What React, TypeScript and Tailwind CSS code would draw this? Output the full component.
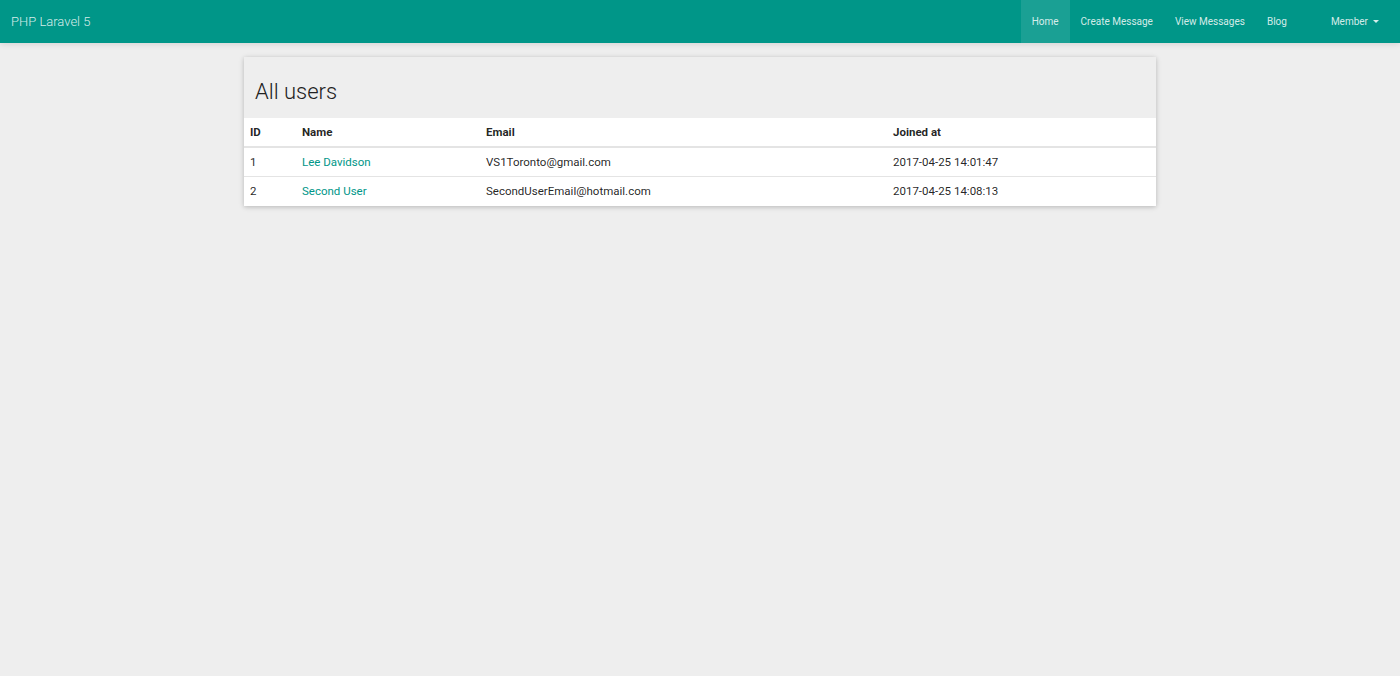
import React from "react";

export default function App() {
  const rows = [
    { id: 1, name: "Lee Davidson", email: "VS1Toronto@gmail.com", joined: "2017-04-25 14:01:47" },
    { id: 2, name: "Second User", email: "SecondUserEmail@hotmail.com", joined: "2017-04-25 14:08:13" },
  ];
  return (
    <div className="min-h-[676px] bg-[#eeeeee] font-['Roboto',sans-serif] text-[11.5px] text-[rgba(0,0,0,0.87)]">
      <nav className="flex h-[43px] items-stretch bg-[#009688] shadow-[0_1px_6px_rgba(0,0,0,0.12)]">
        <div className="flex items-center pl-[11px] text-[13px] font-light text-[rgba(255,255,255,0.84)]">PHP Laravel 5</div>
        <div className="ml-auto flex items-stretch text-[10px] text-[rgba(255,255,255,0.84)]">
          <div className="flex items-center bg-[rgba(255,255,255,0.1)] px-[11px]">Home</div>
          <div className="flex items-center px-[11px]">Create Message</div>
          <div className="flex items-center px-[11px]">View Messages</div>
          <div className="flex items-center px-[11px]">Blog</div>
          <div className="ml-[22px] flex items-center pl-[11px] pr-[21px]">
            Member
            <span className="ml-[5px] inline-block h-0 w-0 border-x-[3px] border-t-[3px] border-x-transparent border-t-[rgba(255,255,255,0.84)]" />
          </div>
        </div>
      </nav>
      <div className="flex justify-center pt-[14px]">
        <div className="w-[912px] bg-white shadow-[0_1px_6px_rgba(0,0,0,0.12),0_1px_4px_rgba(0,0,0,0.12)]">
          <div className="h-[61px] bg-[#eeeeee] pl-[11px] pt-[21px] text-[22px] font-light leading-[28px] text-[#212121]">All users</div>
          <div className="flex h-[30px] items-center border-b-2 border-[#e4e4e4] pt-[1px] font-bold">
            <div className="w-[58px] pl-[6px]">ID</div>
            <div className="w-[184px]">Name</div>
            <div className="w-[407px]">Email</div>
            <div className="flex-1">Joined at</div>
          </div>
          {rows.map((r, i) => (
            <div key={r.id} className={`flex h-[29px] items-center pt-[1px] ${i === 0 ? "border-b border-[#e4e4e4]" : ""}`}>
              <div className="w-[58px] pl-[6px]">{r.id}</div>
              <div className="w-[184px] text-[#009688]">{r.name}</div>
              <div className="w-[407px]">{r.email}</div>
              <div className="flex-1">{r.joined}</div>
            </div>
          ))}
        </div>
      </div>
    </div>
  );
}
